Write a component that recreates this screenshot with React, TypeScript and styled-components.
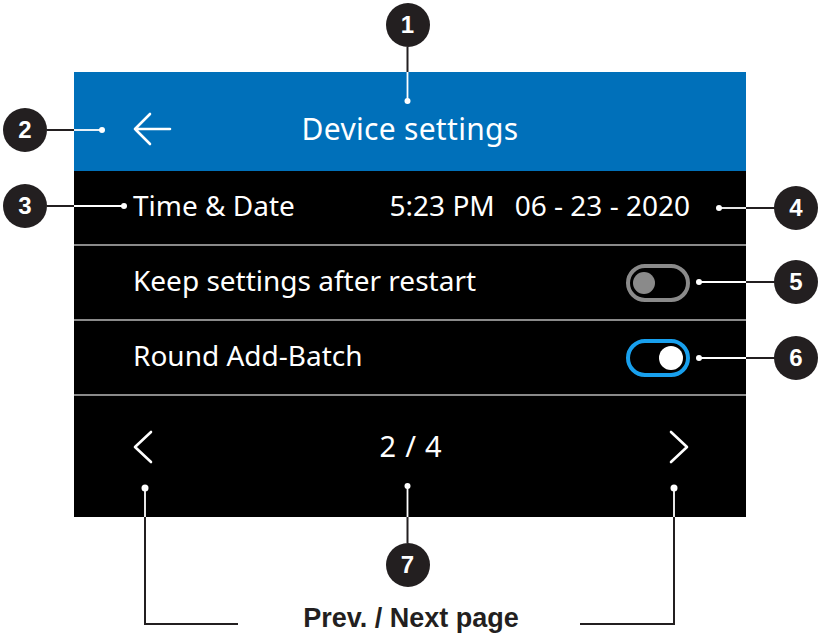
import React from "react";
import styled, { createGlobalStyle } from "styled-components";

const Global = createGlobalStyle`
  html, body { margin: 0; padding: 0; background: #ffffff; }
  body { font-family: "Noto Sans", "Open Sans", sans-serif; }
`;

const Canvas = styled.div`
  position: relative;
  width: 818px;
  height: 635px;
  padding: 72px 0 0 74px;
  box-sizing: border-box;
  display: flex;
  flex-direction: column;
  align-items: flex-start;
  background: #ffffff;
  overflow: hidden;
`;

const Screen = styled.div`
  width: 672px;
  height: 445px;
  background: #000000;
  display: flex;
  flex-direction: column;
  color: #ffffff;
  font-family: "Noto Sans", "Open Sans", sans-serif;
`;

const Header = styled.div`
  height: 99px;
  flex: none;
  box-sizing: border-box;
  padding: 14px 58px 0 58px;
  background: #0070ba;
  display: grid;
  grid-template-columns: 1fr auto 1fr;
  align-items: center;
`;

const BackButton = styled.div`
  display: flex;
  align-items: center;
  justify-self: start;
`;

const Title = styled.div`
  font-size: 30px;
  line-height: 40px;
  letter-spacing: 0.3px;
`;

const Row = styled.div`
  height: 75px;
  flex: none;
  box-sizing: border-box;
  padding: 0 56px 0 59px;
  display: flex;
  align-items: center;
  justify-content: space-between;
  border-bottom: 2px solid #8a8a8a;
  font-size: 28px;
`;

const Label = styled.span`
  line-height: 36px;
  padding-bottom: 5px;
`;

const DateTime = styled.div`
  display: flex;
  gap: 20px;
  line-height: 36px;
  padding-bottom: 5px;
`;

const Toggle = styled.div<{ $on: boolean }>`
  width: 64px;
  height: 38px;
  box-sizing: border-box;
  border-radius: 19px;
  border: 4px solid ${(p) => (p.$on ? "#18a0ee" : "#8a8a8a")};
  padding: 0 3px;
  display: flex;
  align-items: center;
  justify-content: ${(p) => (p.$on ? "flex-end" : "flex-start")};
`;

const Knob = styled.div<{ $on: boolean }>`
  width: ${(p) => (p.$on ? 24 : 22)}px;
  height: ${(p) => (p.$on ? 24 : 22)}px;
  border-radius: 50%;
  background: ${(p) => (p.$on ? "#ffffff" : "#8a8a8a")};
`;

const Footer = styled.div`
  flex: 1;
  box-sizing: border-box;
  padding: 34px 57px 0 59px;
  display: grid;
  grid-template-columns: 1fr auto 1fr;
  align-items: start;
`;

const Chevron = styled.div<{ $side: "left" | "right" }>`
  justify-self: ${(p) => (p.$side === "left" ? "start" : "end")};
  display: flex;
`;

const Pager = styled.div`
  font-size: 29px;
  line-height: 32px;
  letter-spacing: 0.8px;
`;

const Caption = styled.div`
  align-self: stretch;
  margin: 86px 0 0 -74px;
  text-align: center;
  padding-left: 4px;
  font-family: "Liberation Sans", Arial, sans-serif;
  font-weight: 700;
  font-size: 27px;
  line-height: 30px;
  color: #231f20;
`;

const Overlay = styled.svg`
  position: absolute;
  left: 0;
  top: 0;
  pointer-events: none;
`;

const Badge = styled.div<{ $x: number; $y: number }>`
  position: absolute;
  left: ${(p) => p.$x - 22}px;
  top: ${(p) => p.$y - 22}px;
  width: 44px;
  height: 44px;
  border-radius: 50%;
  background: #231f20;
  color: #ffffff;
  display: flex;
  align-items: center;
  justify-content: center;
  font-family: "Liberation Sans", Arial, sans-serif;
  font-weight: 700;
  font-size: 24px;
`;

const DARK = "#231f20";
const WHITE = "#ffffff";

type Seg = [number, number, number, number, string];

const segments: Seg[] = [
  [407.5, 47, 407.5, 72, DARK],
  [407.5, 72, 407.5, 101, WHITE],
  [47, 130, 74, 130, DARK],
  [74, 130, 102, 130, WHITE],
  [47, 206, 74, 206, DARK],
  [74, 206, 124, 206, WHITE],
  [719, 208, 746, 208, WHITE],
  [746, 208, 775, 208, DARK],
  [699, 282, 746, 282, WHITE],
  [746, 282, 775, 282, DARK],
  [699, 358, 746, 358, WHITE],
  [746, 358, 775, 358, DARK],
  [407.5, 486, 407.5, 517, WHITE],
  [407.5, 517, 407.5, 543, DARK],
  [145, 488, 145, 517, WHITE],
  [145, 517, 145, 624, DARK],
  [144, 624, 238, 624, DARK],
  [674, 488, 674, 517, WHITE],
  [674, 517, 674, 624, DARK],
  [580, 624, 675, 624, DARK],
];

const dots: [number, number, number][] = [
  [407.5, 101, 3],
  [102, 130, 3],
  [124, 206, 3],
  [719, 208, 3],
  [699, 282, 3],
  [699, 358, 3],
  [407.5, 486, 3],
  [145, 488, 3.5],
  [674, 488, 3.5],
];

const badges: [number, number, string][] = [
  [407.5, 25, "1"],
  [25, 130, "2"],
  [25, 206, "3"],
  [796, 208, "4"],
  [796, 282, "5"],
  [796, 358, "6"],
  [407.5, 565, "7"],
];

const BackArrow = () => (
  <svg width="40" height="34" viewBox="0 0 40 34" fill="none">
    <path d="M3 17 H38 M18 2 L3 17 L18 32" stroke="#fff" strokeWidth="2.6" strokeLinecap="round" strokeLinejoin="round" />
  </svg>
);

const ChevronIcon = ({ dir }: { dir: "left" | "right" }) => (
  <svg width="20" height="34" viewBox="0 0 20 34" fill="none">
    <path
      d={dir === "left" ? "M18 2 L2 17 L18 32" : "M2 2 L18 17 L2 32"}
      stroke="#fff"
      strokeWidth="2.6"
      strokeLinecap="round"
      strokeLinejoin="round"
    />
  </svg>
);

export default function App() {
  return (
    <>
      <Global />
      <Canvas>
        <Screen>
          <Header>
            <BackButton>
              <BackArrow />
            </BackButton>
            <Title>Device settings</Title>
            <span />
          </Header>
          <Row>
            <Label>Time &amp; Date</Label>
            <DateTime>
              <span>5:23 PM</span>
              <span>06 - 23 - 2020</span>
            </DateTime>
          </Row>
          <Row>
            <Label>Keep settings after restart</Label>
            <Toggle $on={false}>
              <Knob $on={false} />
            </Toggle>
          </Row>
          <Row>
            <Label>Round Add-Batch</Label>
            <Toggle $on={true}>
              <Knob $on={true} />
            </Toggle>
          </Row>
          <Footer>
            <Chevron $side="left">
              <ChevronIcon dir="left" />
            </Chevron>
            <Pager>2 / 4</Pager>
            <Chevron $side="right">
              <ChevronIcon dir="right" />
            </Chevron>
          </Footer>
        </Screen>
        <Caption>Prev. / Next page</Caption>
        <Overlay width="818" height="635" viewBox="0 0 818 635">
          {segments.map(([x1, y1, x2, y2, c], i) => (
            <line key={i} x1={x1} y1={y1} x2={x2} y2={y2} stroke={c} strokeWidth={c === DARK ? 2 : 1.8} />
          ))}
          {dots.map(([cx, cy, r], i) => (
            <circle key={i} cx={cx} cy={cy} r={r} fill={WHITE} />
          ))}
        </Overlay>
        {badges.map(([x, y, n]) => (
          <Badge key={n} $x={x} $y={y}>
            {n}
          </Badge>
        ))}
      </Canvas>
    </>
  );
}
